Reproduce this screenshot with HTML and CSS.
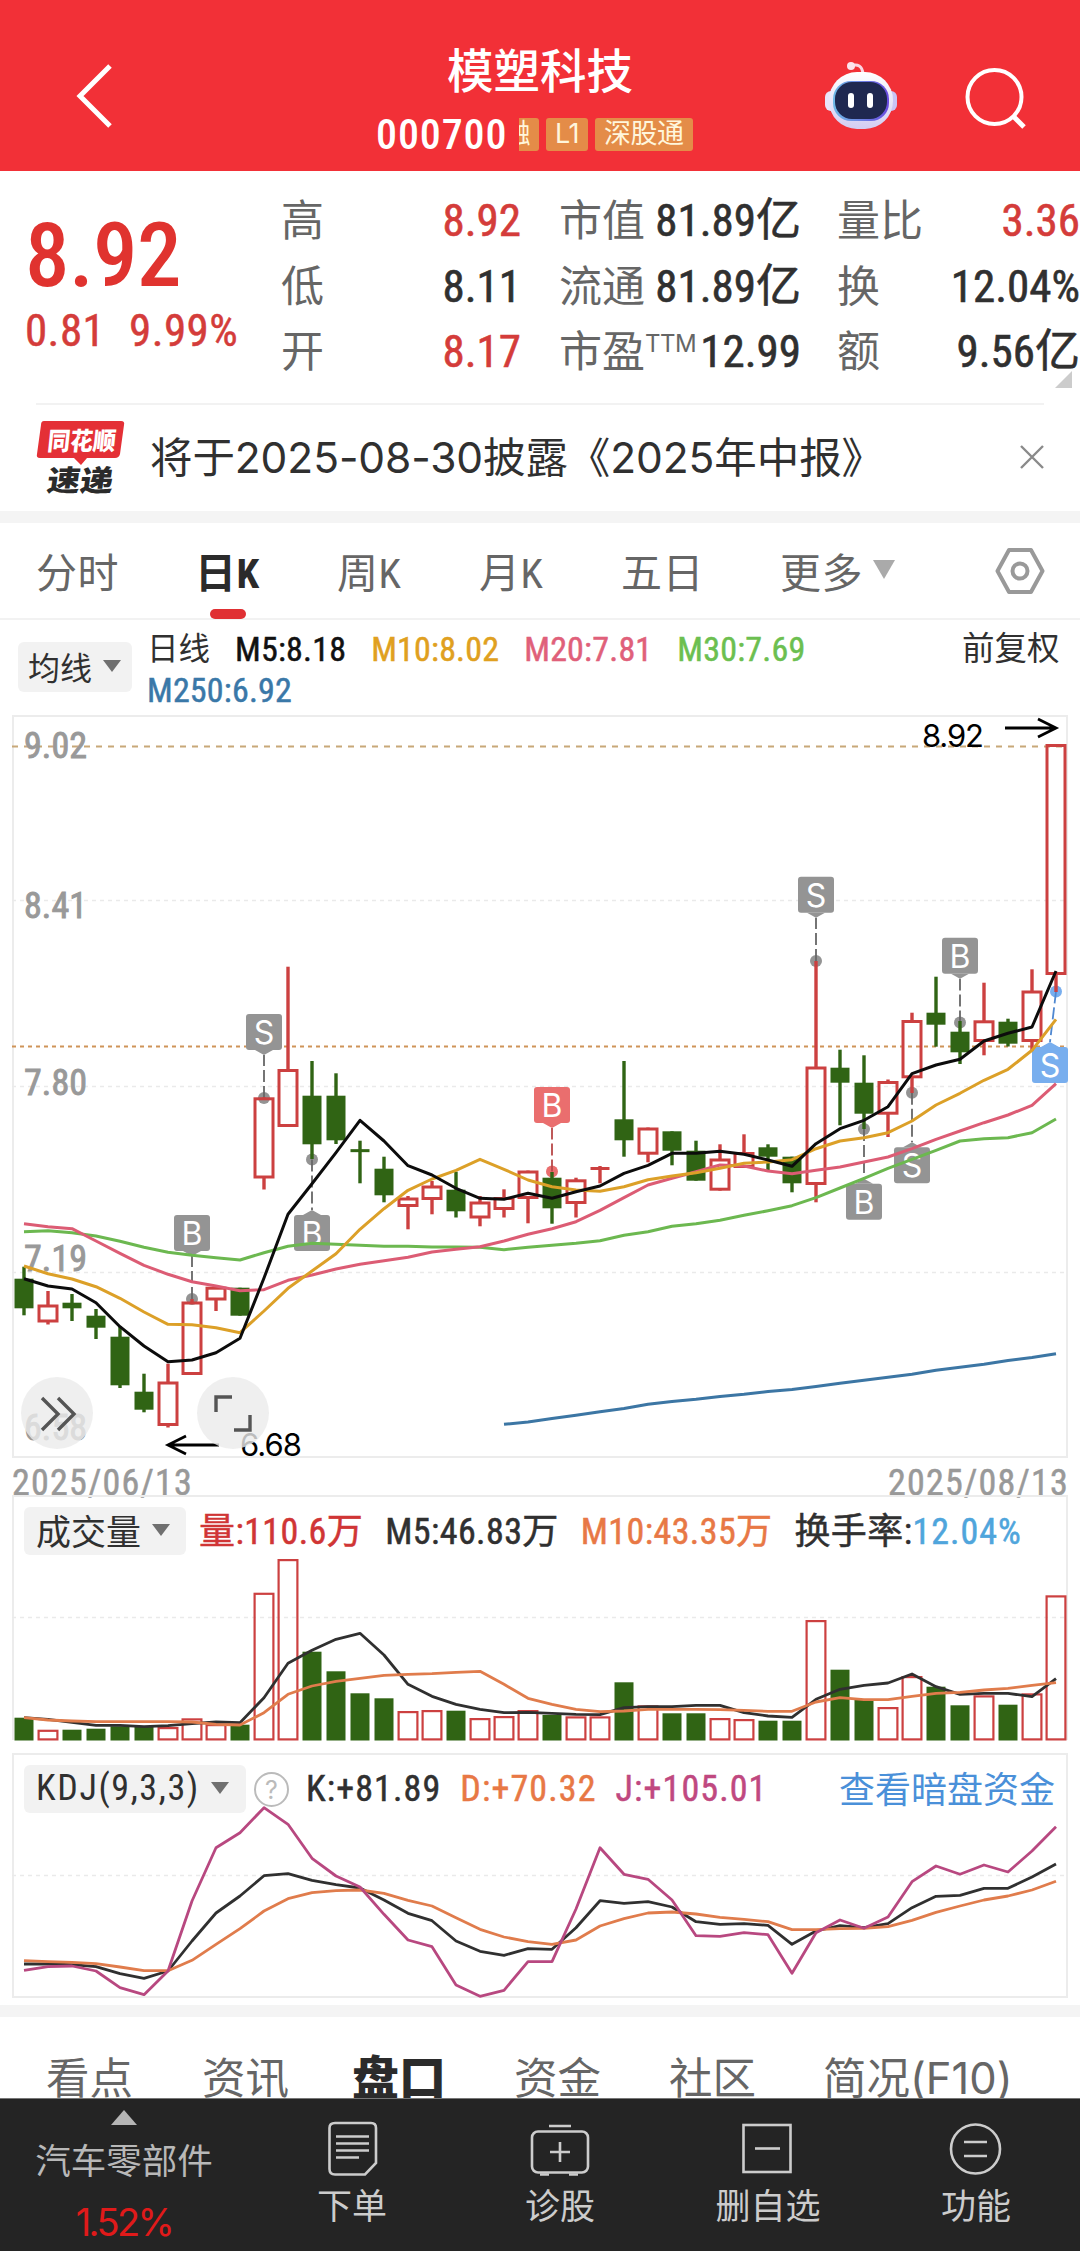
FILE: index.html
```html
<!DOCTYPE html>
<html lang="zh-CN">
  <head>
    <meta charset="utf-8" />
    <meta name="viewport" content="width=device-width, initial-scale=1" />
    <title>模塑科技 000700</title>
    <link rel="stylesheet" href="styles.css">
  </head>
  <body>
    <header class="topbar">
        <svg class="back" width="44" height="70" viewBox="0 0 44 70"><path d="M37 5 L7 35 L37 65" fill="none" stroke="#fff" stroke-width="5"/></svg>
        <div class="stock">
            <h1>模塑科技</h1>
            <div class="code-row">
                <span class="code">000700</span>
                <span class="tag tag-cut"><span>融</span></span>
                <span class="tag">L1</span>
                <span class="tag">深股通</span>
            </div>
        </div>
        <svg class="robot" width="76" height="72" viewBox="823 60 76 72">
            <defs>
                <linearGradient id="shell" x1="0" y1="0" x2="0" y2="1"><stop offset="0" stop-color="#fff"/><stop offset="1" stop-color="#d3cdf2"/></linearGradient>
                <linearGradient id="rim" x1="0" y1="0" x2="1" y2="0"><stop offset="0" stop-color="#6fb9e6"/><stop offset="1" stop-color="#6a4be0"/></linearGradient>
            </defs>
            <path d="M850 66 Q862 62 863 74" fill="none" stroke="#fbd5e2" stroke-width="3"/>
            <circle cx="851" cy="66" r="4" fill="#fde3ec"/>
            <rect x="825" y="91" width="12" height="20" rx="6" fill="#e9e4fa"/>
            <rect x="885" y="91" width="12" height="20" rx="6" fill="#c9c3f5"/>
            <rect x="829" y="72" width="64" height="57" rx="28" fill="url(#shell)"/>
            <rect x="833" y="81" width="56" height="40" rx="18" fill="url(#rim)"/>
            <rect x="835" y="82" width="52" height="37" rx="17" fill="#1f2850"/>
            <rect x="848" y="93" width="6" height="15" rx="3" fill="#fff"/>
            <rect x="867" y="93" width="6" height="15" rx="3" fill="#fff"/>
        </svg>
        <svg class="search" width="64" height="64" viewBox="964 66 64 64"><circle cx="994.5" cy="97" r="27" fill="none" stroke="#fff" stroke-width="4"/><path d="M1013 116 L1024 127" stroke="#fff" stroke-width="5"/></svg>
    </header>

    <section class="quote">
        <div class="price">
            <div class="now">8.92</div>
            <div class="change"><span>0.81</span><span>9.99%</span></div>
        </div>
        <dl class="col">
            <div><dt>高</dt><dd class="up">8.92</dd></div>
            <div><dt>低</dt><dd>8.11</dd></div>
            <div><dt>开</dt><dd class="up">8.17</dd></div>
        </dl>
        <dl class="col">
            <div><dt>市值</dt><dd>81.89亿</dd></div>
            <div><dt>流通</dt><dd>81.89亿</dd></div>
            <div><dt>市盈<sup>TTM</sup></dt><dd>12.99</dd></div>
        </dl>
        <dl class="col">
            <div><dt>量比</dt><dd class="up">3.36</dd></div>
            <div><dt>换</dt><dd>12.04%</dd></div>
            <div><dt>额</dt><dd>9.56亿</dd></div>
        </dl>
        <i class="corner"></i>
    </section>

    <section class="news">
        <div class="logo">
            <svg width="90" height="75" viewBox="0 0 90 75">
                <path d="M8 1 H85 Q89 1 88 5 L84 34 Q83 38 79 38 H51 L45 45 L38 38 H4 Q0 38 1 34 L5 5 Q5 1 8 1Z" fill="#e43036"/>
                <text x="14" y="30" class="logo-top" textLength="68" lengthAdjust="spacingAndGlyphs" transform="skewX(-6)">同花顺</text>
                <text x="20" y="71" class="logo-bottom" textLength="66" lengthAdjust="spacingAndGlyphs" transform="skewX(-8)">速递</text>
            </svg>
        </div>
        <p>将于2025-08-30披露《2025年中报》</p>
        <svg class="close" width="24" height="24" viewBox="0 0 24 24"><path d="M1 1 L23 23 M23 1 L1 23" stroke="#8a8a8a" stroke-width="2.4"/></svg>
    </section>

    <nav class="period">
        <a>分时</a>
        <a class="active">日K</a>
        <a>周K</a>
        <a>月K</a>
        <a>五日</a>
        <a>更多<svg width="22" height="19" viewBox="0 0 22 19"><path d="M0 0 H22 L11 19Z" fill="#aaa"/></svg></a>
        <svg class="setting" width="50" height="48" viewBox="0 0 50 48"><path d="M14 3 H36 L47.500 24 L36 45 H14 L2.500 24Z" fill="none" stroke="#999" stroke-width="4" stroke-linejoin="round"/><circle cx="25" cy="24" r="7.500" fill="none" stroke="#999" stroke-width="4"/></svg>
    </nav>

    <section class="legend">
        <span class="picker picker-ma">均线<i class="caret"></i></span>
        <div class="ma">
            <span class="zh">日线</span>
            <span class="m5">M5:8.18</span>
            <span class="m10">M10:8.02</span>
            <span class="m20">M20:7.81</span>
            <span class="m30">M30:7.69</span>
            <span class="m250">M250:6.92</span>
        </div>
        <span class="adjust">前复权</span>
    </section>

    <svg id="kline" width="1080" height="743" viewBox="0 714 1080 743"></svg>
    <div class="dates"><span>2025/06/13</span><span>2025/08/13</span></div>

    <section class="panel volume">
        <svg id="volume" width="1080" height="258" viewBox="0 1494 1080 258"></svg>
        <div class="panel-head">
            <span class="picker">成交量<i class="caret"></i></span>
            <span class="v-now">量:110.6万</span>
            <span class="v-m5">M5:46.83万</span>
            <span class="orange">M10:43.35万</span>
            <span class="v-rate">换手率:<b>12.04%</b></span>
        </div>
    </section>

    <section class="panel kdj">
        <svg id="kdj" width="1080" height="245" viewBox="0 1752 1080 245"></svg>
        <div class="panel-head">
            <span class="picker">KDJ(9,3,3)<i class="caret"></i></span>
            <span class="help">?</span>
            <span class="k">K:+81.89</span>
            <span class="orange d">D:+70.32</span>
            <span class="j">J:+105.01</span>
            <a class="dark">查看暗盘资金</a>
        </div>
    </section>

    <nav class="info">
        <a>看点</a>
        <a>资讯</a>
        <a class="active">盘口</a>
        <a>资金</a>
        <a>社区</a>
        <a>简况(F10)</a>
    </nav>

    <footer class="bottom">
        <div class="sector">
            <svg width="26" height="15" viewBox="0 0 26 15"><path d="M13 0 L26 15 H0Z" fill="#b5b5b5"/></svg>
            <span>汽车零部件</span>
            <em>1.52%</em>
        </div>
        <div class="item">
            <svg width="60" height="56" viewBox="322 2119 60 56"><path d="M335 2122 H371 Q376 2122 376 2127 V2162 L365 2173.500 H335 Q329.500 2173.500 329.500 2168 V2127 Q329.500 2122 335 2122Z"/><path d="M336 2135.500 H369 M336 2142.500 H369 M336 2149.500 H369 M336 2156.500 H359"/></svg>
            <span>下单</span>
        </div>
        <div class="item">
            <svg width="60" height="56" viewBox="530 2119 60 56"><rect x="532" y="2130.500" width="56" height="41" rx="6"/><path d="M549 2125 H571 M560 2141 V2161 M550 2151 H570"/><path d="M540 2173.500 H549 M569 2173.500 H578"/></svg>
            <span>诊股</span>
        </div>
        <div class="item">
            <svg width="60" height="56" viewBox="738 2119 60 56"><rect x="743.500" y="2124" width="47" height="47"/><path d="M755 2147.500 H780"/></svg>
            <span>删自选</span>
        </div>
        <div class="item">
            <svg width="60" height="56" viewBox="946 2119 60 56"><circle cx="975.500" cy="2148" r="24.500"/><path d="M964 2141 H987 M964 2155 H987"/></svg>
            <span>功能</span>
        </div>
    </footer>
    <script src="chart.js"></script>
  </body>
</html>
```

FILE: styles.css
```css
*{
    box-sizing: border-box;
}

body{
    margin: 0;
    width: 1080px;
    height: 2251px;
    overflow: hidden;
    background-color: #fff;
    color: #303030;
    font-family: "Roboto Condensed", "Noto Sans CJK SC", sans-serif;
    display: flex;
    flex-direction: column;
}

body > *{
    flex: none;
}

h1, p, dl, dd{
    margin: 0;
}

svg{
    display: block;
}

/* header */
.topbar{
    height: 171px;
    background-color: #f23037;
    display: grid;
    grid-template-columns: 376px 447px 141px 116px;
    color: #fff;
}

.back{
    margin: 61px 0 0 73px;
}

.stock h1{
    margin-top: 39px;
    width: 328px;
    text-align: center;
    font-size: 46.5px;
    font-weight: 500;
    line-height: 66px;
}

.code-row{
    display: flex;
    align-items: center;
    margin-top: 12px;
    height: 34px;
}

.code{
    width: 143px;
    font-size: 42px;
    font-weight: 500;
    letter-spacing: 0.9px;
}

.tag{
    height: 33px;
    line-height: 32px;
    padding: 0 9px;
    margin-right: 7px;
    border-radius: 3px;
    background-color: #e48c48;
    color: #fff6dc;
    font-size: 27px;
    font-family: "Inter", "Noto Sans CJK SC", sans-serif;
    letter-spacing: -0.5px;
}

.tag-cut{
    width: 20px;
    padding: 0;
    overflow: hidden;
    border-radius: 0 3px 3px 0;
    display: flex;
    justify-content: flex-end;
    padding-right: 9px;
}

.robot{
    margin-top: 60px;
}

.search{
    margin-top: 66px;
}

/* quote */
.quote{
    position: relative;
    height: 232px;
    display: grid;
    grid-template-columns: 281px 240px 280px 279px;
    padding-top: 18px;
}

.price{
    padding: 15px 0 0 25px;
    color: #e0332f;
}

.now{
    font-size: 89px;
    line-height: 104px;
    font-weight: 500;
    letter-spacing: -0.6px;
}

.change{
    display: flex;
    gap: 24px;
    margin-top: -3px;
    font-size: 45px;
    line-height: 52px;
    color: #d43c3a;
    letter-spacing: 0.4px;
    -webkit-text-stroke: 0.5px currentColor;
}

.col > div{
    display: flex;
    justify-content: space-between;
    align-items: baseline;
    height: 65.500px;
}

.col:nth-child(3){
    padding-left: 38px;
}

.col:nth-child(4){
    padding-left: 36px;
}

.col dt{
    font-size: 43px;
    line-height: 64px;
    color: #666;
    white-space: nowrap;
}

.col sup{
    font: 24px "Inter", sans-serif;
    vertical-align: 15px;
    line-height: 0;
    letter-spacing: -0.5px;
}

.col dd{
    font-size: 45px;
    line-height: 60px;
    white-space: nowrap;
    -webkit-text-stroke: 0.6px currentColor;
}

.col .up{
    color: #d43c3a;
}

.corner{
    position: absolute;
    right: 8px;
    bottom: 15px;
    border-left: 17px solid transparent;
    border-bottom: 17px solid #ccc;
}

/* news */
.news{
    height: 120px;
    border-bottom: 12px solid #f4f4f4;
    display: flex;
    align-items: center;
    padding: 0 36px;
    background: linear-gradient(#f2f2f2, #f2f2f2) 36px 0 / 1008px 2px no-repeat;
}

.logo{
    width: 114px;
    padding-top: 1px;
}

.logo-top{
    font: 900 25px "Noto Sans CJK SC", sans-serif;
    fill: #fff;
}

.logo-bottom{
    font: 900 29px "Noto Sans CJK SC", sans-serif;
    fill: #2b2b2b;
}

.news p{
    flex: 1;
    padding-top: 2px;
    font-size: 42.500px;
    font-family: "Inter", "Noto Sans CJK SC", sans-serif;
    line-height: 60px;
    letter-spacing: -0.1px;
    white-space: nowrap;
}

/* period tabs */
.period{
    height: 97px;
    border-bottom: 2px solid #f2f2f2;
    display: grid;
    grid-template-columns: 161px 140px 142px 142px 159px 215px 50px;
    align-items: center;
    padding-left: 36px;
    font-size: 41px;
    color: #666;
}

.period a{
    display: flex;
    align-items: center;
    height: 96px;
    padding-bottom: 3px;
    gap: 10px;
    letter-spacing: 0.5px;
}

.period .active{
    position: relative;
    margin-left: -2px;
    font-weight: 700;
    color: #2b2b2b;
}

.period .active::after{
    content: "";
    position: absolute;
    left: 15px;
    bottom: 0;
    width: 36px;
    height: 10px;
    border-radius: 5px;
    background-color: #e03033;
}

/* MA legend */
.legend{
    height: 95px;
    display: flex;
    padding-left: 18px;
}

.picker{
    display: flex;
    align-items: center;
    gap: 11px;
    height: 48px;
    padding: 0 14px 3px 12px;
    border-radius: 6px;
    background-color: #f2f2f2;
    color: #303030;
    font-size: 35px;
    white-space: nowrap;
}

.picker-ma{
    margin-top: 22px;
    width: 114px;
    height: 50px;
    padding: 0 0 3px 10px;
    font-size: 32px;
}

.caret{
    border: 9px solid transparent;
    border-top: 12px solid #707070;
    border-bottom: 0;
}

.ma{
    width: 725px;
    margin: 9px 0 0 15px;
    display: flex;
    flex-wrap: wrap;
    align-content: flex-start;
    font-size: 34px;
    line-height: 41px;
    letter-spacing: 0.2px;
}

.ma span{
    margin-right: 25px;
    -webkit-text-stroke: 0.5px currentColor;
}

.ma .zh{
    font-size: 31.500px;
    letter-spacing: 0;
    -webkit-text-stroke: 0;
}

.m5{ color: #111; }
.m10{ color: #e0a020; }
.m20{ color: #e0607a; }
.m30{ color: #6cbf50; }
.m250{ color: #3a78a8; }

.adjust{
    margin: 8px 0 0 90px;
    font-size: 32.500px;
    line-height: 42px;
}

/* charts */
.axis{
    font: 36px "Roboto Condensed", sans-serif;
    fill: #999;
    stroke: #999;
    stroke-width: 0.9px;
}

.mark{
    font: 31px "Inter", sans-serif;
    fill: #000;
}

.badge{
    font: 32px "Inter", sans-serif;
    fill: #fff;
    text-anchor: middle;
}

.dates{
    height: 37px;
    padding: 4px 11px 0 12px;
    display: flex;
    justify-content: space-between;
    font-size: 36px;
    line-height: 43px;
    letter-spacing: 1.2px;
    color: #999;
    -webkit-text-stroke: 0.5px currentColor;
}

.panel{
    display: grid;
}

.panel > *{
    grid-area: 1 / 1;
}

.panel-head{
    display: flex;
    height: 48px;
    margin: 12px 0 0 24px;
    align-items: center;
    font-size: 36px;
    letter-spacing: 0.4px;
    white-space: nowrap;
}

.panel-head > span:not(.picker):not(.help){
    -webkit-text-stroke: 0.5px currentColor;
}

.volume .panel-head > span:not(.picker){
    padding-bottom: 6px;
}

.panel-head .picker{
    width: 162px;
    letter-spacing: 0;
}

.volume span + span{
    margin-left: 22px;
}

.volume .v-now{
    margin-left: 13px;
    color: #d03535;
}

.v-rate b{
    font-weight: 400;
    letter-spacing: 1px;
    color: #4fa5dc;
}

.orange{
    color: #e87845;
}

.kdj .picker{
    width: 222px;
    font-size: 36px;
    letter-spacing: 1.6px;
}

.help{
    width: 35px;
    height: 35px;
    margin: 0 17px 0 8px;
    border: 2px solid #bbb;
    border-radius: 50%;
    color: #bbb;
    font: 25px/32px "Inter", sans-serif;
    text-align: center;
}

.kdj .k, .kdj .d, .kdj .j{
    letter-spacing: 1.1px;
}

.kdj .d, .kdj .j{
    margin-left: 19px;
}

.j{
    color: #c04880;
}

.dark{
    margin: 0 25px 0 auto;
    padding-bottom: 5px;
    color: #4a90d9;
    font-size: 36px;
    letter-spacing: 0;
}

/* info tabs, cut off by the bottom bar */
.info{
    margin-top: 7px;
    height: 93px;
    border-top: 12px solid #f4f4f4;
    display: grid;
    grid-template-columns: 156px 150px 162px 155px 154px 1fr;
    padding: 30px 0 0 46px;
    overflow: hidden;
    font-family: "Inter", "Noto Sans CJK SC", sans-serif;
    font-size: 43.500px;
    line-height: 62px;
    color: #666;
    white-space: nowrap;
}

.info .active{
    font-size: 47px;
    font-weight: 900;
    color: #2b2b2b;
}

/* bottom bar */
.bottom{
    height: 154px;
    background-color: #242424;
    border-top: 1px solid #777;
    display: grid;
    grid-template-columns: 248px 208px 208px 208px 208px;
    color: #ccc;
}

.sector{
    display: flex;
    flex-direction: column;
    align-items: center;
    padding-top: 11px;
    font-size: 35.500px;
    color: #b8b8b8;
}

.sector span{
    margin-top: 12px;
    line-height: 50px;
}

.sector em{
    margin-top: 10px;
    color: #e01a1a;
    font: 38px/50px "Inter", sans-serif;
    letter-spacing: -2.6px;
}

.item{
    display: flex;
    flex-direction: column;
    align-items: center;
    padding-top: 21px;
    font-size: 35px;
}

.item svg{
    fill: none;
    stroke: #ccc;
    stroke-width: 2.6;
}

.item span{
    margin-top: 7px;
    line-height: 50px;
}
```

FILE: chart.js
```js
const RED = '#cc4040'
const GREEN = '#306414'
const STEP = 24
const X0 = 24

// x of the n-th trading day
function px(i){
    return X0 + i * STEP
}

function line(x1, y1, x2, y2, color, w, dash){
    return `<line x1="${x1}" y1="${y1}" x2="${x2}" y2="${y2}" stroke="${color}" stroke-width="${w}"${dash ? ` stroke-dasharray="${dash}"` : ''}/>`
}

function poly(values, color, w, start = 0){
    let pts = values.map((v, i) => px(i + start) + ',' + v).join(' ')
    return `<polyline points="${pts}" fill="none" stroke="${color}" stroke-width="${w}" stroke-linejoin="round"/>`
}

// up day is hollow, down day is filled
function box(i, top, bottom, up, w){
    if(up){
        return `<rect x="${px(i) - 10.5 + w / 2}" y="${top + w / 2}" width="${21 - w}" height="${Math.max(bottom - top - w, 0.5)}" fill="none" stroke="${RED}" stroke-width="${w}"/>`
    }
    return `<rect x="${px(i) - 9.5}" y="${top}" width="19" height="${bottom - top}" fill="${GREEN}"/>`
}

// [up, high, body top, body bottom, low]
const candles = [
    [0,1265.7,1277.7,1307.3,1314.3],[1,1290,1303.5,1321.5,1323.5],[0,1293,1301.7,1307.3,1320],[0,1308,1314.7,1326.7,1338],
    [0,1325,1335.7,1384.3,1387],[0,1372.7,1390.7,1408.7,1411.3],[1,1362.7,1380.5,1425,1426.5],[1,1298,1300.5,1374,1374],
    [1,1285.7,1285.7,1299.5,1310],[0,1286.7,1286.7,1314.7,1314.7],[1,1096.3,1096.3,1177.5,1188.5],[1,965.7,1068,1126,1126],
    [0,1060,1094.7,1143.3,1158],[0,1072.3,1094.7,1139.3,1143],[0,1139.7,1148.3,1151,1182.3],[0,1155.7,1167.7,1194.3,1201.3],
    [1,1195,1196.5,1206,1228.3],[1,1180,1184.5,1199,1213.3],[0,1170.7,1188.7,1210.3,1216.5],[1,1195,1200.5,1217.5,1225.3],
    [1,1188.3,1196,1209,1216.5],[1,1169.5,1169.5,1198,1222.3],[0,1171,1176.7,1207.3,1222.7],[1,1176.7,1178.3,1203,1216.5],
    [1,1165,1166,1169,1182.3],[0,1060,1118.3,1139.3,1155.7],[1,1126.5,1126.5,1153.7,1161.3],[0,1130.3,1130.3,1149.7,1164.3],
    [0,1139.7,1149.7,1179.7,1179.7],[1,1143.3,1157.5,1189.7,1189.7],[1,1133.3,1151,1167,1167],[0,1143.3,1146.3,1155.7,1169],
    [0,1155.7,1155.7,1182.3,1191.3],[1,960,1065.5,1184,1201.3],[0,1048.7,1066.7,1081.7,1124.3],[0,1054.3,1081.7,1112.7,1128],
    [1,1078.5,1080,1113.7,1136],[1,1011.7,1019,1077.3,1092],[0,975.7,1011.7,1023.7,1045.7],[0,1020,1030.7,1051.3,1063],
    [1,981.7,1019.3,1041,1054.3],[0,1017.7,1020.7,1042.7,1045.5],[1,968.3,989.5,1041,1049.5],[1,743,743,974,991]
]
const ma5 = [1277.7,1285,1288,1301.7,1325.7,1345,1360.7,1359,1351.7,1337.3,1277,1213.3,1182.7,1151.7,1119.3,1140,1164.7,1174,1187.3,1197.3,1198.3,1192.3,1197.3,1190.7,1185,1172.3,1164.3,1152.3,1152.3,1150.3,1153.3,1159,1165.3,1142.7,1127.7,1119.3,1105.7,1072.7,1064,1058.3,1040,1032.3,1026,970]
const ma10 = [1265,1272.7,1278,1285.7,1297.3,1311,1323.3,1323.7,1326.7,1331.7,1310,1287.3,1270,1252.7,1228.3,1207.7,1189.3,1178,1169.3,1158.3,1168.3,1179,1185.7,1189,1190.3,1185.7,1178.7,1175,1171.7,1167.3,1162.3,1161,1158.7,1147.7,1140,1136.7,1131.7,1120,1104,1092.3,1079.3,1068.3,1049.3,1018.3]
const ma20 = [1222.7,1225.7,1227.7,1240,1252.3,1264.3,1273.3,1280.7,1285,1289.7,1288.7,1279.3,1274,1268,1263.3,1259.7,1256.3,1251,1248.3,1245.7,1240,1233.3,1227.7,1220.7,1209.3,1196.7,1184,1177.3,1170.7,1164,1165,1170,1172.7,1169.3,1166,1161,1156,1147.7,1138.3,1130,1121.7,1114,1104.3,1082.7]
const ma30 = [1230.7,1229.7,1231.7,1235,1240.3,1246.3,1251.3,1254.3,1256.7,1259,1251.7,1245.3,1242.3,1243.3,1244.3,1245.3,1245.3,1246,1246,1246.3,1248.7,1246.3,1244.3,1242.3,1239.7,1234.3,1230.7,1225.3,1222.7,1219.3,1214.3,1209.7,1204.7,1196.7,1187,1177.3,1167.3,1158.3,1149.3,1140,1137.7,1136.7,1131.7,1118]
const ma250 = [1423.3,1421,1417.5,1414.3,1410.7,1407.5,1403.3,1400.5,1398.3,1395.5,1393.3,1390.5,1388.5,1385.5,1382.3,1379.3,1376.3,1373.3,1369.3,1366.3,1363.3,1359.5,1356.5,1352.7]

// [text, x, box top, dot x, dot y, color, line color]
const GRAY = '#949494'
const badges = [
    ['B',192,1214,192,1298,GRAY,'#666'],['S',264,1013,264,1097,GRAY,'#666'],['B',312,1214,312,1158.5,GRAY,'#666'],
    ['B',552,1086,552,1170.5,'#ea6e6e','#b84848'],['S',816,875.7,816,960,GRAY,'#666'],['B',864,1182.7,864,1128,GRAY,'#666'],
    ['S',912,1146.3,912,1091.7,GRAY,'#666'],['B',960,936.7,960,1021.5,GRAY,'#666'],['S',1050,1046,1056,990.5,'#78aeee','#5088d0']
]

function drawBadge([t, x, top, dx, dy, color, lc]){
    let below = dy < top
    let tip = below ? top - 5 : top + 41
    let base = below ? top : top + 36
    return `<circle cx="${dx}" cy="${dy}" r="6" fill="${color}"/>`
        + line(dx, dy, x, tip, lc, 1.8, '12 4')
        + `<path d="M${x - 9} ${base} L${x} ${tip} L${x + 9} ${base}Z" fill="${color}"/>`
        + `<rect x="${x - 18}" y="${top}" width="36" height="36" rx="3" fill="${color}"/>`
        + `<text class="badge" x="${x}" y="${top + 30}">${t}</text>`
}

function frame(top, bottom){
    return `<path d="M13 ${bottom} V${top} H1067 V${bottom}Z" fill="none" stroke="#ececec" stroke-width="2"/>`
}

function drawKline(){
    let s = frame(715, 1456)
    for(let y of [899.5, 1085.5, 1271.5]){
        s += line(12, y, 1066, y, '#eaeaea', 1.6, '4 4')
    }
    s += line(12, 745.5, 1066, 745.5, '#c8a878', 2, '6 6')
    s += line(12, 1045.5, 1066, 1045.5, '#cf9458', 2, '4 4')
    let labels = [['9.02',757],['8.41',917],['7.80',1094],['7.19',1270],['6.58',1439]]
    for(let [t, y] of labels){
        s += `<text class="axis" x="24" y="${y}" textLength="63">${t}</text>`
    }
    s += badges.map(drawBadge).join('')
    candles.forEach(([up, high, top, bottom, low], i) => {
        let c = up ? RED : GREEN
        if(bottom - top < 4){
            s += line(px(i) - 9.5, (top + bottom) / 2, px(i) + 9.5, (top + bottom) / 2, c, 3) + line(px(i), high, px(i), low, c, 3.4)
            return
        }
        s += line(px(i), high, px(i), top + 1, c, 3.4) + line(px(i), bottom - 1, px(i), low, c, 3.4)
        s += box(i, top, bottom, up, 3)
    })
    s += poly(ma250, '#3c76a4', 3, 20)
    s += poly(ma30, '#6cb850', 3) + poly(ma20, '#dc5c74', 3) + poly(ma10, '#dca028', 3) + poly(ma5, '#0c0c0c', 3)
    // high and low marks
    s += '<path d="M1005 727 H1055 M1038 718 L1056 727 L1038 736" fill="none" stroke="#000" stroke-width="2.8"/>'
    s += '<text class="mark" x="922" y="746" textLength="62">8.92</text>'
    s += '<path d="M219 1444 H169 M186 1435 L168 1444 L186 1453" fill="none" stroke="#000" stroke-width="2.8"/>'
    s += '<text class="mark" x="240" y="1455" textLength="62">6.68</text>'
    // round buttons
    s += '<circle cx="57" cy="1412" r="36" fill="#ebebeb" fill-opacity="0.8"/>'
    s += '<path d="M42 1397 L58 1413 L42 1429 M58 1397 L74 1413 L58 1429" fill="none" stroke="#555" stroke-width="3.4"/>'
    s += '<circle cx="233" cy="1412" r="36" fill="#ebebeb" fill-opacity="0.8"/>'
    s += '<path d="M232 1396 H216 V1411 M234 1429 H250 V1414" fill="none" stroke="#555" stroke-width="3.4"/>'
    document.getElementById('kline').innerHTML = s
}

const volTop = [1716.7,1728.7,1728.7,1727.7,1725.3,1726,1726,1717.3,1723,1723.7,1591.7,1558,1650.7,1670.3,1692.3,1697.3,1710,1709,1709.7,1717,1715,1709,1714,1715.3,1715.3,1681.3,1704.3,1712.3,1712.3,1717,1718,1719.7,1719.7,1619,1668.7,1698.3,1706,1675,1685.7,1704.3,1694.3,1703.7,1692.3,1594.3]
const vol5 = [1716.7,1718.3,1721.3,1724.3,1724.3,1725.7,1724.7,1722.7,1721,1721.7,1696.7,1662.3,1649.3,1638.3,1632.3,1654,1683.3,1695.3,1703.3,1708.3,1711.7,1711.3,1712.3,1713.3,1713.7,1706.7,1705.7,1705.7,1704.3,1704.3,1711.7,1715,1716.3,1698.3,1688.3,1684.3,1682,1673,1685.7,1693.3,1692.3,1692.3,1695.7,1677.7]
const vol10 = [1716.7,1719,1720,1720.7,1720.7,1720.7,1720.7,1721,1723.3,1724,1711.7,1693.3,1685,1680.3,1677.3,1674.3,1673.3,1672.7,1671.3,1670.3,1683.3,1697.3,1703.3,1708.3,1710.7,1710,1708.3,1708.3,1708.3,1708.7,1709.3,1710.3,1710.3,1701,1696.7,1698.7,1698.7,1695.3,1692.3,1691.3,1689,1687.3,1684.3,1681.7]

function drawVolume(){
    let s = '<path d="M13 1739 V1495 H1067 V1739" fill="none" stroke="#ececec" stroke-width="2"/>'
    s += line(12, 1616.5, 1066, 1616.5, '#eaeaea', 1.6, '4 4')
    volTop.forEach((top, i) => {
        s += box(i, top, 1739.5, candles[i][0], 2.2)
    })
    s += poly(vol5, '#303030', 2.8) + poly(vol10, '#e07c4c', 2.8)
    document.getElementById('volume').innerHTML = s
}

const kLine = [1963,1963,1963.7,1965.7,1972.7,1977.3,1970,1940,1912,1895,1874.7,1872.7,1879.3,1883.7,1887,1899,1912.3,1919.7,1940,1950.3,1954.3,1947.7,1948.3,1926.7,1899.7,1902.3,1900.7,1906,1920.7,1923.3,1922.7,1924.3,1943.3,1930,1924.7,1926.7,1922.7,1906.7,1895.3,1894.3,1887.3,1887.3,1876,1863]
const dLine = [1959.7,1960.7,1961.3,1962.7,1966,1969.7,1969.7,1959.3,1943.3,1927.7,1910,1897.7,1891.7,1889.7,1889,1892.3,1899.3,1905,1916.7,1928.3,1936,1940.7,1943.3,1939,1925,1917.7,1912,1911,1913,1916.3,1918.3,1920.7,1928.7,1928.7,1927.7,1927.3,1925.7,1919.3,1911.3,1905,1899,1895,1889,1880.3]
const jLine = [1969.3,1965.7,1965,1970,1986.7,1993.7,1970,1900,1846.7,1831.7,1806.7,1823.3,1857.3,1875,1886,1913.3,1939,1945.7,1984,1995.3,1989.3,1960.7,1960.7,1908,1846.7,1873.3,1878.3,1899,1934.7,1935.3,1931.7,1933.7,1972.3,1931.7,1919,1927.3,1916,1880.7,1865,1873.3,1864,1871,1850,1825.7]

function drawKdj(){
    let s = frame(1753, 1996)
    s += line(12, 1874.5, 1066, 1874.5, '#eaeaea', 1.6, '4 4')
    s += poly(kLine, '#303030', 2.8) + poly(dLine, '#e07c4c', 2.8) + poly(jLine, '#b84880', 2.8)
    document.getElementById('kdj').innerHTML = s
}

drawKline()
drawVolume()
drawKdj()
```
